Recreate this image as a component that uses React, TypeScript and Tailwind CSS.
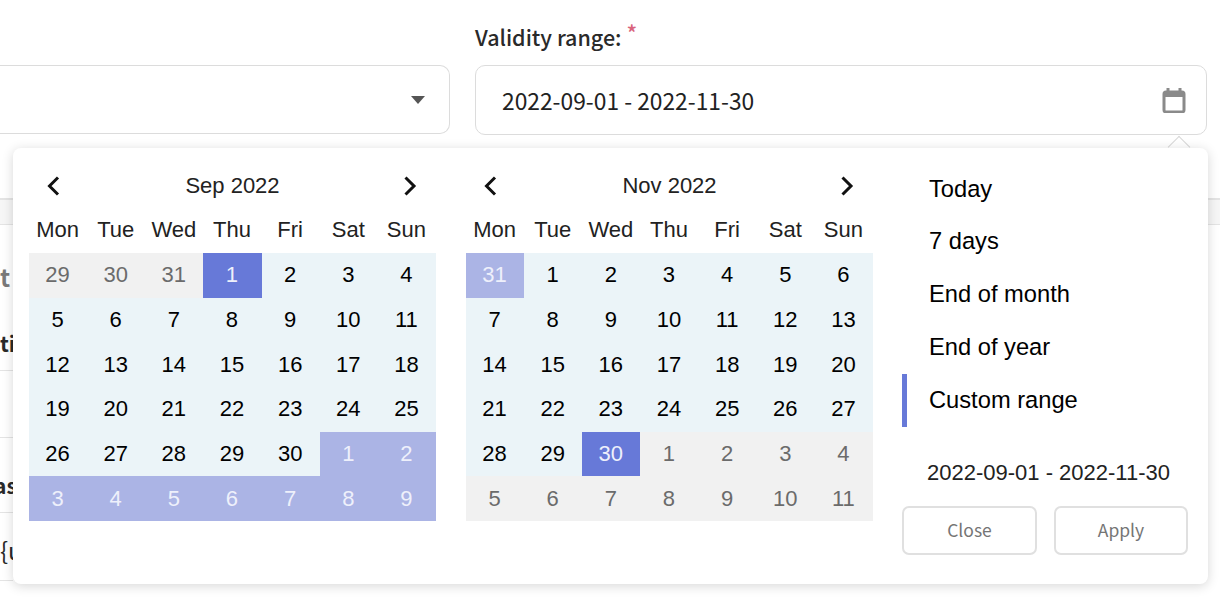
const sans = "font-['Liberation_Sans',Arial,sans-serif]";
const plex = "font-['Noto_Sans_CJK_SC','Noto_Sans',sans-serif]";

type Day = { n: number; kind: "in" | "out" | "edge" | "next" };

const sep: Day[] = [
  { n: 29, kind: "out" }, { n: 30, kind: "out" }, { n: 31, kind: "out" }, { n: 1, kind: "edge" },
  ...[2, 3, 4].map((n) => ({ n, kind: "in" as const })),
  ...Array.from({ length: 26 }, (_, i) => ({ n: i + 5, kind: "in" as const })),
  ...[1, 2, 3, 4, 5, 6, 7, 8, 9].map((n) => ({ n, kind: "next" as const })),
];

const nov: Day[] = [
  { n: 31, kind: "next" },
  ...Array.from({ length: 29 }, (_, i) => ({ n: i + 1, kind: "in" as const })),
  { n: 30, kind: "edge" },
  ...[1, 2, 3, 4, 5, 6, 7, 8, 9, 10, 11].map((n) => ({ n, kind: "out" as const })),
];

const dayClass = {
  in: "bg-[#ebf4f8] text-black",
  out: "bg-[#f1f1f1] text-[#6b6b6b]",
  edge: "bg-[#6779d8] text-[#eef0fb]",
  next: "bg-[#abb4e5] text-[#eef0fb]",
};

const weekdays = ["Mon", "Tue", "Wed", "Thu", "Fri", "Sat", "Sun"];

const Month = ({ title, days }: { title: string; days: Day[] }) => (
  <div className="w-[407px]">
    <div className="flex items-center justify-between h-[34px] px-[16px]">
      <svg width="18" height="24" viewBox="0 0 18 24" fill="none" stroke="#111" strokeWidth="3"><path d="M13 3.500 4.500 12l8.500 8.500" /></svg>
      <span className="text-[22px] text-[#222] pb-[2px]">{title}</span>
      <svg width="18" height="24" viewBox="0 0 18 24" fill="none" stroke="#111" strokeWidth="3"><path d="M3.500 3.500 12 12l-8.500 8.500" /></svg>
    </div>
    <div className="grid grid-cols-7 h-[46px] items-center mt-[4px] pb-[2px] text-[22px] text-[#222] text-center">
      {weekdays.map((d) => <span key={d} className="pr-[1px]">{d}</span>)}
    </div>
    <div className="grid grid-cols-7 auto-rows-[44.670px] text-[22px] text-center">
      {days.map((d, i) => (
        <div key={i} className={`flex items-center justify-center pr-[1px] pb-[1px] ${dayClass[d.kind]}`}>{d.n}</div>
      ))}
    </div>
  </div>
);

const presets = ["Today", "7 days", "End of month", "End of year", "Custom range"];

export default function App() {
  return (
    <div className={`relative w-[1220px] h-[604px] overflow-hidden bg-white ${plex}`}>
      {/* form row */}
      <div className="flex gap-[25px] pl-0 pr-[13px] pt-[22px]">
        <div className="flex-1 pt-[43px]">
          <div className="flex items-center justify-end h-[69px] border border-l-0 border-[#dcdcdc] rounded-r-[10px] pr-[24px]">
            <span className="border-x-[7.500px] border-x-transparent border-t-[8px] border-t-[#555]" />
          </div>
        </div>
        <div className="w-[732px]">
          <div className="h-[43px] text-[21.500px] font-medium text-[#2a2a2a] leading-[30px]">
            Validity range:<sup className="text-[#d9647c] text-[22px] ml-[5px] top-[-4px]">*</sup>
          </div>
          <div className="flex items-center justify-between h-[70px] border border-[#dcdcdc] rounded-[10px] pl-[26px] pr-[20px] text-[22.800px] text-[#222]">
            <span className="pt-[2px]">2022-09-01 - 2022-11-30</span>
            <svg width="24" height="26" viewBox="0 0 24 26" fill="none">
              <path d="M6 1v4M18 1v4" stroke="#8a8a8a" strokeWidth="3" />
              <rect x="2" y="5" width="20" height="20" rx="2" stroke="#8a8a8a" strokeWidth="3" />
              <path d="M2 8h20" stroke="#8a8a8a" strokeWidth="4" />
            </svg>
          </div>
        </div>
      </div>

      {/* page behind the popup */}
      <div className="mt-[63px] h-[27px] border-t-2 border-b border-[#e4e4e4] bg-[#f6f6f6]" />
      <div className="w-[13px] overflow-hidden whitespace-nowrap text-[#2a2a2a]">
        <div className="h-[146px] pt-[36px] border-b border-[#e4e4e4] text-[24px] font-bold text-[#7a7a7a] leading-[32px]">
          <div>t</div>
          <div className="text-[21px] text-[#2a2a2a] mt-[34px]">ti</div>
        </div>
        <div className="h-[67px] border-b border-[#e4e4e4]" />
        <div className="h-[75px] border-b border-[#e4e4e4] pt-[32px] text-[21px] font-bold leading-[30px] -indent-[6px]">as</div>
        <div className="h-[68px] border-b border-[#e4e4e4] pt-[22px] text-[24px] leading-[30px]">{"{u"}</div>
      </div>

      {/* little arrow on top of the popup */}
      <span className="absolute left-[1171px] top-[139px] w-4 h-4 rotate-45 bg-white border-l border-t border-[#d8d8d8]" />

      {/* popup */}
      <div className={`absolute left-[13px] top-[148px] w-[1195px] h-[436px] bg-white rounded-[8px] shadow-[0_2px_12px_rgba(0,0,0,0.16)] flex pl-[16px] pt-[21px] ${sans}`}>
        <Month title="Sep 2022" days={sep} />
        <div className="w-[30px]" />
        <Month title="Nov 2022" days={nov} />
        <div className="w-[322px] pl-[29px] -mt-[6px]">
          <ul className="text-[23.700px] text-black">
            {presets.map((p, i) => (
              <li key={p} className={`flex items-center h-[52.800px] pl-[22px] border-l-[5px] w-[286px] ${i === 4 ? "border-[#6779d8]" : "border-transparent"}`}>
                {p}
              </li>
            ))}
          </ul>
          <div className="pl-[25px] mt-[27px] text-[22px] text-[#222] leading-[38px]">2022-09-01 - 2022-11-30</div>
          <div className={`flex gap-[17px] mt-[14px] text-[17.500px] text-[#757575] ${plex}`}>
            <button className="w-[135px] h-[49px] border-2 border-[#e0e0e0] rounded-[7px]">Close</button>
            <button className="w-[134px] h-[49px] border-2 border-[#e0e0e0] rounded-[7px]">Apply</button>
          </div>
        </div>
      </div>
    </div>
  );
}
